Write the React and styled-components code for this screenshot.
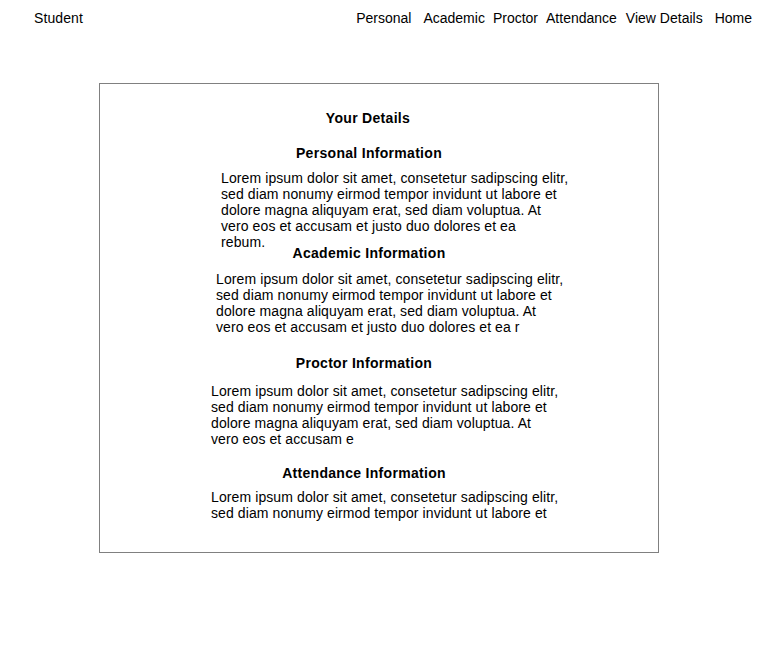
import React from "react";
import styled, { createGlobalStyle } from "styled-components";

const GlobalStyle = createGlobalStyle`
  html, body {
    margin: 0;
    padding: 0;
    background: #ffffff;
  }
  body {
    font-family: "Liberation Sans", Arial, sans-serif;
    font-size: 14px;
    line-height: 16px;
    color: #000000;
  }
`;

const sections = [
  {
    title: "Personal Information",
    shift: 20,
    indent: 121,
    gap: 9,
    height: 100,
    text: "Lorem ipsum dolor sit amet, consetetur sadipscing elitr, sed diam nonumy eirmod tempor invidunt ut labore et dolore magna aliquyam erat, sed diam voluptua. At vero eos et accusam et justo duo dolores et ea\nrebum.",
  },
  {
    title: "Academic Information",
    shift: 20,
    indent: 116,
    gap: 10,
    height: 110,
    text: "Lorem ipsum dolor sit amet, consetetur sadipscing elitr, sed diam nonumy eirmod tempor invidunt ut labore et dolore magna aliquyam erat, sed diam voluptua. At vero eos et accusam et justo duo dolores et ea r",
  },
  {
    title: "Proctor Information",
    shift: 30,
    indent: 111,
    gap: 12,
    height: 110,
    text: "Lorem ipsum dolor sit amet, consetetur sadipscing elitr, sed diam nonumy eirmod tempor invidunt ut labore et dolore magna aliquyam erat, sed diam voluptua. At vero eos et accusam e",
  },
  {
    title: "Attendance Information",
    shift: 30,
    indent: 111,
    gap: 8,
    height: 60,
    text: "Lorem ipsum dolor sit amet, consetetur sadipscing elitr, sed diam nonumy eirmod tempor invidunt ut labore et",
  },
];

const navLinks = [
  { label: "Personal", space: 0 },
  { label: "Academic", space: 12 },
  { label: "Proctor", space: 8 },
  { label: "Attendance", space: 8 },
  { label: "View Details", space: 9 },
  { label: "Home", space: 12 },
];

export default function App() {
  return (
    <>
      <GlobalStyle />
      <Page>
        <TopBar>
          <Brand>Student</Brand>
          <Nav>
            {navLinks.map((l) => (
              <NavLink key={l.label} $space={l.space}>
                {l.label}
              </NavLink>
            ))}
          </Nav>
        </TopBar>

        <Card>
          <Title $shift={22} $below={19}>
            Your Details
          </Title>
          {sections.map((s) => (
            <Section key={s.title} $height={s.height}>
              <Title $shift={s.shift}>{s.title}</Title>
              <Para $indent={s.indent} $gap={s.gap}>
                {s.text}
              </Para>
            </Section>
          ))}
        </Card>
      </Page>
    </>
  );
}

const Page = styled.div`
  width: 784px;
  min-height: 654px;
`;

const TopBar = styled.header`
  display: flex;
  justify-content: space-between;
  align-items: center;
  padding: 10px 32px 0 34px;
  height: 16px;
`;

const Brand = styled.div`
  font-size: 14px;
  letter-spacing: 0.1px;
`;

const Nav = styled.nav`
  display: flex;
`;

const NavLink = styled.a`
  margin-left: ${(p) => p.$space}px;
  color: #000;
  text-decoration: none;
  cursor: pointer;
`;

const Card = styled.main`
  box-sizing: border-box;
  margin: 57px 0 0 99px;
  width: 560px;
  height: 470px;
  border: 1px solid #808080;
  padding-top: 26px;
  display: flex;
  flex-direction: column;
`;

const Section = styled.section`
  flex-shrink: 0;
  height: ${(p) => p.$height}px;
  display: flex;
  flex-direction: column;
`;

const Title = styled.h2`
  flex-shrink: 0;
  margin: 0 0 ${(p) => p.$below || 0}px 0;
  padding-right: ${(p) => p.$shift}px;
  font-size: 14px;
  font-weight: bold;
  letter-spacing: 0.3px;
  text-align: center;
  line-height: 16px;
`;

const Para = styled.p`
  flex-shrink: 0;
  margin: ${(p) => p.$gap}px 0 0 ${(p) => p.$indent}px;
  width: 348px;
  height: 0;
  overflow: visible;
  font-size: 14px;
  line-height: 16px;
  letter-spacing: 0.1px;
  white-space: pre-line;
`;
